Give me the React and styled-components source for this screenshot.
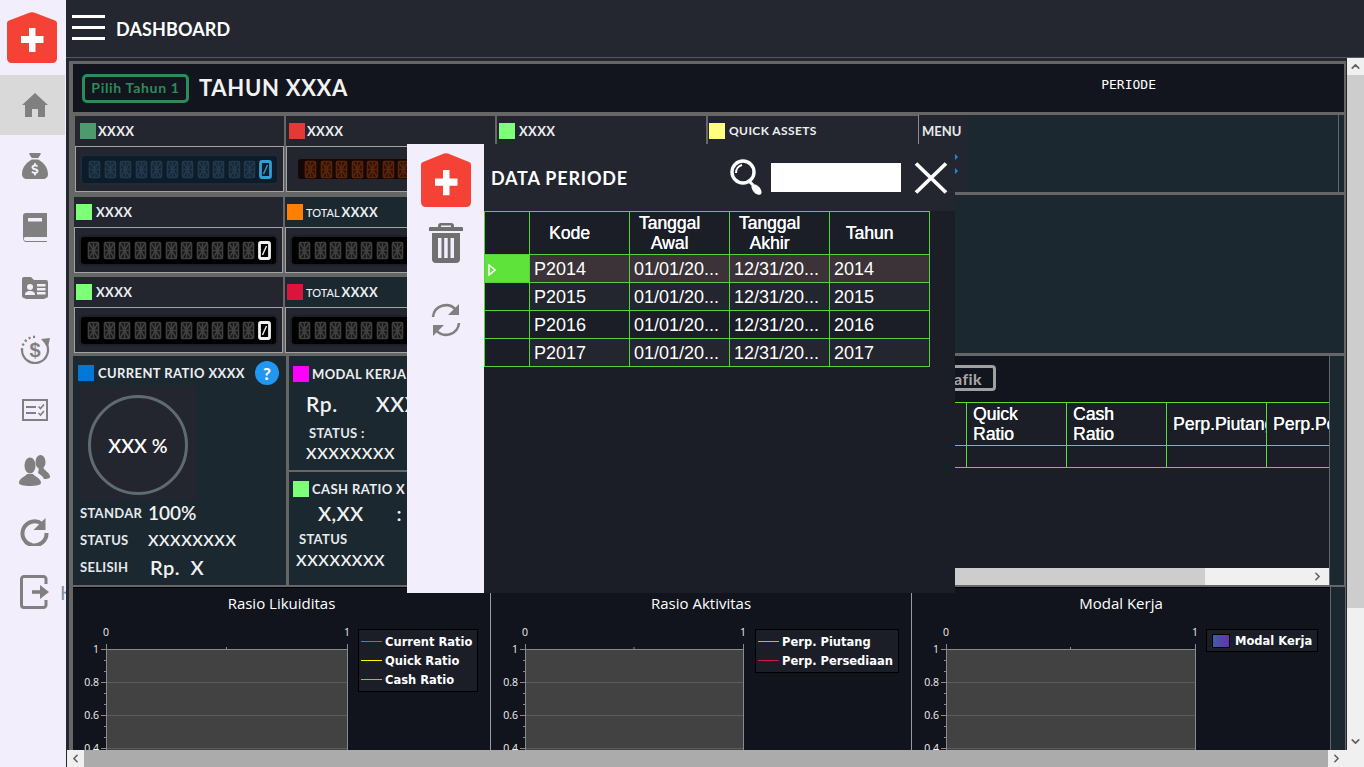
import React from 'react';
import styled, { createGlobalStyle } from 'styled-components';
import { FaSackDollar } from 'react-icons/fa6';
import { ChevronUp, ChevronDown, ChevronLeft, ChevronRight } from 'lucide-react';

const GlobalStyle = createGlobalStyle`
    html, body { margin: 0; padding: 0; background: #24272f; overflow: hidden; }
    * { box-sizing: border-box; }
`;

const LABEL_FONT = '"Lato", "Open Sans", sans-serif';
const TABLE_FONT = '"Liberation Sans", Arial, sans-serif';
const ICON_GREY = '#808080';

const Page = styled.div`
    position: relative;
    display: flex;
    width: 1364px;
    height: 767px;
    overflow: hidden;
    font-family: ${LABEL_FONT};
    color: #fff;
`;

/* sidebar */
const Sidebar = styled.aside`
    flex: 0 0 66px;
    height: 100%;
    background: #f3eefb;
    overflow: hidden;
`;

const LogoSlot = styled.div`
    height: 75px;
    padding: 12px 0 0 7px;
`;

const NavItem = styled.div`
    position: relative;
    height: ${props => props.$active ? '60px' : '60.8px'};
    margin-bottom: ${props => props.$active ? '1px' : '0'};
    width: 65px;
    padding-left: 4px;
    display: flex;
    align-items: center;
    justify-content: center;
    background: ${props => props.$active ? '#d9d9d9' : 'transparent'};
`;

const NavLabel = styled.span`
    position: absolute;
    left: 60px;
    top: 18px;
    font-size: 20px;
    color: #7f93ad;
`;

/* right side */
const Main = styled.div`
    flex: 1;
    min-width: 0;
    display: flex;
    flex-direction: column;
`;

const Header = styled.header`
    flex: 0 0 58px;
    display: flex;
    align-items: center;
    gap: 11px;
    padding: 0 0 0 6px;
    background: #24272f;
    border-bottom: 1px solid #555a5e;
`;

const Burger = styled.div`
    width: 33px;
    display: flex;
    flex-direction: column;
    gap: 8px;
    margin-top: -2px;
    span { display: block; height: 3px; background: #fff; }
`;

const HeaderTitle = styled.h1`
    margin: 0;
    font-size: 18px;
    font-weight: 700;
    letter-spacing: 0.1px;
`;

const ScrollRow = styled.div`
    flex: 1;
    min-height: 0;
    display: flex;
`;

const Canvas = styled.div`
    flex: 0 0 1281px;
    padding: 3px 1px 0 3px;
    background: #24272f;
    overflow: hidden;
`;

const CanvasInner = styled.div`
    height: 100%;
    padding: 3px 2px 0 4px;
    background: #666;
    overflow: hidden;
`;

const TopPanel = styled.section`
    height: 48px;
    display: flex;
    align-items: center;
    padding: 0 188px 0 9px;
    background: #12151e;
`;

const YearButton = styled.div`
    width: 107px;
    height: 29px;
    padding-bottom: 2px;
    display: flex;
    align-items: center;
    justify-content: center;
    border: 3px solid #2e8b57;
    border-radius: 5px;
    color: #2e8b57;
    font-size: 14px;
    font-weight: 700;
    letter-spacing: 0.7px;
`;

const YearTitle = styled.div`
    margin: -2px 0 0 10px;
    font-size: 22px;
    font-weight: 700;
    letter-spacing: 0.7px;
    color: #f2f2f2;
`;

const PeriodLabel = styled.div`
    margin: -8px 0 0 auto;
    font-family: "DejaVu Sans Mono", monospace;
    font-size: 13px;
`;

/* kpi area */
const KpiFirstRow = styled.div`
    display: flex;
    gap: 2px;
    height: 76px;
    margin-top: 4px;
    padding-left: 2px;
`;

const KpiRest = styled.div`
    display: flex;
    height: 158px;
    margin-top: 3px;
`;

const KpiColumns = styled.div`
    flex: 0 0 424px;
    padding: 2px 0 0 1px;
    display: grid;
    grid-template-columns: 209px 209px;
    grid-auto-rows: 76px;
    column-gap: 2px;
    row-gap: 4px;
`;

const Card = styled.div`
    width: ${props => props.$width || '209px'};
    display: flex;
    flex-direction: column;
    background: ${props => props.$teal ? '#1c2830' : '#24262f'};
`;

const CardHead = styled.div`
    flex: 0 0 30px;
    display: flex;
    align-items: center;
    gap: 2px;
    padding-left: ${props => props.$inset || '1px'};
`;

const Swatch = styled.i`
    flex: 0 0 16px;
    display: block;
    width: 16px;
    height: 16px;
    margin-top: ${props => props.$lift || '-1px'};
    background: ${props => props.$color};
`;

const CardLabel = styled.span`
    margin: -1px 0 0 ${props => props.$gap || '0'};
    padding-right: 4px;
    font-size: ${props => props.$size || '13px'};
    font-weight: 700;
    letter-spacing: 0.4px;
    color: #eceff2;
    white-space: nowrap;
    small { font-size: 11px; font-weight: 500; letter-spacing: 0; margin-right: 2px; }
`;

const ReadoutBox = styled.div`
    flex: 1;
    display: flex;
    align-items: center;
    padding: 0 4px;
    border: 1px solid #a3a3a3;
    background: #24262f;
    overflow: hidden;
`;

const LCD_TONES = {
    blue: { bg: '#0d1c29', edge: '#1f2a39', seg: '#22384b', lit: '#2f9fd2' },
    red: { bg: '#150804', edge: '#24262f', seg: '#59240b', lit: '#ff6a1a' },
    black: { bg: '#000', edge: '#1d1f26', seg: '#3f3f3f', lit: '#f2f2f2' },
};

const LcdFrame = styled.div`
    flex: 1;
    display: flex;
    gap: 2.5px;
    align-items: center;
    height: ${props => props.$tone === 'red' ? '24px' : '31px'};
    margin-left: ${props => props.$tone === 'red' ? '5px' : '0'};
    padding-left: 6px;
    border: 2px solid ${props => LCD_TONES[props.$tone].edge};
    border-radius: 5px;
    background: ${props => LCD_TONES[props.$tone].bg};
`;

const Digit = ({ color, lit }) => (
    <svg width="13" height="19" viewBox="0 0 13 19" style={{ flex: '0 0 13px' }}>
        {lit ? (
            <g fill="none" stroke={color}>
                <rect x="1.5" y="1.5" width="10" height="16" rx="1.5" strokeWidth="2.8" />
                <path d="M8.5 5 L4.5 14" strokeWidth="1.4" />
            </g>
        ) : (
            <g fill="none" stroke={color} strokeWidth="1.6">
                <rect x="1.5" y="1.5" width="10" height="16" rx="1" fill={color} fillOpacity="0.3" />
                <path d="M2 9.5 H11 M6.5 2 V17 M2 2 L11 17 M11 2 L2 17" />
            </g>
        )}
    </svg>
);

const Lcd = ({ tone = 'black', count = 12 }) => (
    <LcdFrame $tone={tone}>
        {Array.from({ length: count }, (_, i) => {
            const lit = tone !== 'red' && i === count - 1;
            return <Digit key={i} lit={lit} color={lit ? LCD_TONES[tone].lit : LCD_TONES[tone].seg} />;
        })}
    </LcdFrame>
);

const KpiCard = ({ color, label, prefix, tone, teal, inset, gap, width, size }) => (
    <Card $teal={teal} $width={width}>
        <CardHead $inset={inset}>
            <Swatch $color={color} />
            <CardLabel $gap={gap} $size={size}>{prefix && <small>{prefix}</small>}{label}</CardLabel>
        </CardHead>
        <ReadoutBox><Lcd tone={tone} /></ReadoutBox>
    </Card>
);

const MenuPanel = styled.div`
    flex: 1;
    display: flex;
    margin: -1px 0 0 -2px;
    background: #1c2830;
`;

const MenuEdge = styled.div`
    flex: 0 0 5px;
    margin: -1px 0 0 -1px;
    background: #1c2830;
`;

const MenuCell = styled.div`
    width: 50px;
    height: 100%;
    padding: 8px 0 0 3px;
    background: #24262f;
    border-left: 1px solid #8a8a8a;
    font-size: 13px;
    font-weight: 700;
    color: #e6e9ec;
`;

const MenuArrow = styled.i`
    display: block;
    width: 0;
    height: 0;
    margin: ${props => props.$first ? '15px' : '8px'} 0 0 33px;
    border-left: 3px solid #1e88e5;
    border-top: 3px solid transparent;
    border-bottom: 3px solid transparent;
`;

const KpiWide = styled.div`
    flex: 1;
    background: #1c2830;
`;

/* ratio row */
const LowerRow = styled.div`
    display: flex;
    height: 229px;
    margin-top: 3px;
`;

const RatioPanel = styled.div`
    flex: 0 0 213px;
    padding: 5px 0 0 5px;
    background: #1c2830;
`;

const RatioHead = styled.div`
    display: flex;
    align-items: center;
    height: 24px;
    gap: 4px;
`;

const HelpBadge = styled.span`
    flex: 0 0 24px;
    height: 24px;
    margin-left: 2px;
    display: flex;
    align-items: center;
    justify-content: center;
    border-radius: 50%;
    background: #2196f3;
    color: #fff;
    font-size: 17px;
    font-weight: 900;
`;

const GaugeBox = styled.div`
    width: 117px;
    height: 114px;
    margin: 1px 0 0 1px;
    padding: 9px 0 0 9px;
    background: #24262f;
`;

const Gauge = styled.div`
    width: 100px;
    height: 100px;
    display: flex;
    align-items: center;
    justify-content: center;
    border: 3px solid #5f6b73;
    border-radius: 50%;
    font-size: 19.5px;
    font-weight: 600;
`;

const StatRow = styled.div`
    display: grid;
    grid-template-columns: 68px 1fr;
    align-items: center;
    height: 27px;
    margin-top: ${props => props.$shift || '0'};
    padding-left: 2px;
`;

const StatLabel = styled.span`
    font-size: 13px;
    font-weight: 700;
    letter-spacing: 0.3px;
    color: #e6e9ec;
`;

const StatValue = styled.span`
    font-size: ${props => props.$size || '16px'};
    font-weight: 600;
    letter-spacing: ${props => props.$track || '0.5px'};
    padding-left: ${props => props.$inset || '0'};
    color: #f2f2f2;
    white-space: nowrap;
`;

const MiddleColumn = styled.div`
    flex: 0 0 211px;
    margin-left: 3px;
    display: flex;
    flex-direction: column;
    gap: 2px;
`;

const MiniCard = styled.div`
    flex: ${props => props.$grow};
    padding: ${props => props.$pad};
    background: #1c2830;
    overflow: hidden;
`;

const MiniHead = styled.div`
    display: flex;
    align-items: center;
    gap: 3px;
    height: 20px;
`;

const MiniLine = styled.div`
    display: flex;
    align-items: center;
    gap: ${props => props.$gap || '0'};
    margin: ${props => props.$space || '0'};
`;

const MiniAmount = styled.span`
    font-size: ${props => props.$size || '21px'};
    font-weight: 600;
    letter-spacing: ${props => props.$track || '0.6px'};
    color: #f2f2f2;
    white-space: nowrap;
`;

const TablePanel = styled.div`
    flex: 0 0 826px;
    margin-left: 3px;
    display: flex;
    flex-direction: column;
    background: #1b1e27;
    overflow: hidden;
`;

const TableBar = styled.div`
    flex: 0 0 46px;
    padding: 9px 0 0 373px;
    background: #12151e;
`;

const ChartButton = styled.div`
    width: 120px;
    height: 26px;
    display: flex;
    align-items: center;
    justify-content: flex-end;
    padding-right: 11px;
    border: 3px solid #a0a0a0;
    border-radius: 4px;
    color: #a8a8a8;
    font-size: 16px;
    font-weight: 700;
    letter-spacing: 0.4px;
`;

const RatioGrid = styled.table`
    flex: 0 0 auto;
    width: 863px;
    table-layout: fixed;
    border-collapse: collapse;
    font-family: ${TABLE_FONT};
    font-size: 17.5px;
    line-height: 20px;
    color: #fff;
    th, td {
        border: 1px solid #57dd37;
        text-align: left;
        font-weight: 400;
        overflow: hidden;
        white-space: nowrap;
    }
    th {
        height: 43px;
        padding: 0 20px 0 6px;
        white-space: normal;
        text-shadow: 0.3px 0 0 #fff;
    }
    td { height: 22px; padding: 0 0 0 6px; }
`;

const SideStripe = styled.div`
    flex: 0 0 14px;
    margin-left: 1px;
    background: #1c2830;
`;

const PanelScroll = styled.div`
    margin-top: auto;
    flex: 0 0 17px;
    display: flex;
    align-items: center;
    justify-content: flex-end;
    padding-right: 5px;
    background: linear-gradient(to right, #cdcdcd 702px, #f0f0f0 702px);
`;

/* charts */
const ChartRow = styled.div`
    display: flex;
    height: 170px;
    margin-top: 2px;
`;

const ChartCard = styled.div`
    flex: 0 0 ${props => props.$width}px;
    padding-top: 5px;
    background: #11141d;
    border-top: 1px solid #000;
    border-right: ${props => props.$divider ? '1px solid #9a9a9a' : 'none'};
    overflow: hidden;
`;

const ChartTitle = styled.div`
    height: 22px;
    text-align: center;
    font-family: "Open Sans", sans-serif;
    font-size: 15px;
    color: #fff;
`;

const ChartBody = styled.div`
    display: flex;
    align-items: flex-start;
`;

const Legend = styled.ul`
    list-style: none;
    margin: 14px 0 0 ${props => props.$gap}px;
    padding: ${props => props.$pad || '2px 5px 2px 2px'};
    background: #1b1e27;
    border: 1px solid #000;
    font-family: "DejaVu Sans", sans-serif;
    font-size: 11.5px;
    font-weight: 700;
    color: #fff;
`;

const LegendItem = styled.li`
    display: flex;
    align-items: center;
    gap: 3px;
    height: 19px;
    white-space: nowrap;
`;

const LegendLine = styled.i`
    display: block;
    flex: 0 0 21px;
    height: 1px;
    background: ${props => props.$color};
`;

const LegendSwatch = styled.i`
    display: block;
    width: 18px;
    height: 14px;
    margin: 0 2px;
    border: 1px solid #000;
    background: linear-gradient(to right, #3b5fa8, #6a2fa8);
`;

/* window scrollbars */
const VScroll = styled.div`
    flex: 0 0 17px;
    display: flex;
    flex-direction: column;
    align-items: center;
    background: #f0f0f0;
    color: #606060;
`;

const VThumb = styled.div`
    width: 100%;
    height: 533px;
    margin-bottom: auto;
    background: #cdcdcd;
`;

const ArrowSlot = styled.div`
    flex: 0 0 17px;
    display: flex;
    align-items: center;
    justify-content: center;
    color: #606060;
`;

const HScroll = styled.div`
    flex: 0 0 17px;
    display: flex;
    margin-left: 1px;
    background: #f0f0f0;
`;

const HThumb = styled.div`
    flex: 0 0 1244px;
    background: #ababab;
`;

/* dialog */
const Dialog = styled.div`
    position: absolute;
    left: 407px;
    top: 144px;
    width: 548px;
    height: 449px;
    display: flex;
    background: #1b1e27;
`;

const DialogRail = styled.div`
    flex: 0 0 77px;
    display: flex;
    flex-direction: column;
    align-items: center;
    padding-top: 9px;
    background: #f3eefb;
`;

const RailButton = styled.div`
    display: flex;
    justify-content: center;
    margin-top: ${props => props.$gap}px;
`;

const DialogMain = styled.div`
    flex: 1;
    min-width: 0;
`;

const DialogHead = styled.div`
    height: 67px;
    display: flex;
    align-items: center;
    padding: 0 7px 0 7px;
    background: #24262f;
`;

const DialogTitle = styled.div`
    flex: 1;
    font-size: 18px;
    font-weight: 700;
    letter-spacing: 0.8px;
    margin-top: 1px;
`;

const SearchInput = styled.div`
    width: 130px;
    height: 29px;
    margin: 0 13px 0 9px;
    background: #fff;
`;

const PeriodTable = styled.table`
    width: 446px;
    table-layout: fixed;
    border-collapse: collapse;
    font-family: ${TABLE_FONT};
    color: #fff;
    th, td {
        border: 1px solid #57d13f;
        overflow: hidden;
        white-space: nowrap;
    }
    th {
        height: 43px;
        font-size: 17.5px;
        line-height: 20px;
        font-weight: 400;
        text-align: center;
        white-space: normal;
        padding: 0 20px 0 0;
        background: #1b1e27;
        text-shadow: 0.3px 0 0 #fff;
    }
    td {
        height: 28px;
        padding: 2px 0 0 4px;
        font-size: 18px;
    }
`;

const PeriodRow = styled.tr`
    background: ${props => props.$selected ? '#3c3338' : props.$odd ? '#24262f' : '#1b1e27'};
`;

const RowHead = styled.td`
    background: ${props => props.$selected ? '#5de33a' : '#1b1e27'};
`;

/* drawn icons */
const Logo = ({ h = 51 }) => (
    <svg width="50" height={h} viewBox="0 0 50 51" preserveAspectRatio="none" style={{ display: 'block' }}>
        <path d="M0 11 Q0 9 2 8.5 L23 0.5 Q25 -0.2 27 0.5 L48 8.5 Q50 9 50 11 V46 Q50 51 45 51 H5 Q0 51 0 46 Z" fill="#f44336" />
        <path d="M22 16 H28.5 V24 H36.5 V31 H28.5 V40 H22 V31 H14 V24 H22 Z" fill="#fff" />
    </svg>
);

const HomeIcon = () => (
    <svg width="26" height="24" viewBox="0 0 26 24" fill={ICON_GREY}>
        <path d="M13 0 L26 12 H23 V24 H16 V16 H10 V24 H3 V12 H0 Z" />
    </svg>
);

const BookIcon = () => (
    <svg width="24" height="29" viewBox="0 0 24 29">
        <path d="M0 3 A3 3 0 0 1 3 0 H24 V24 H3 A3 3 0 0 0 0 26 Z" fill={ICON_GREY} />
        <rect x="5" y="5" width="14" height="3.5" fill="#f3eefb" />
        <path d="M0.5 25.5 A2.5 2.5 0 0 0 3 28.5 H24" fill="none" stroke={ICON_GREY} />
    </svg>
);

const CardIcon = () => (
    <svg width="26" height="22" viewBox="0 0 26 22">
        <path d="M2 0 H9 L12 3 H24 A2 2 0 0 1 26 5 V19 A2 2 0 0 1 24 21 L22 22 H4 L2 21 A2 2 0 0 1 0 19 V2 A2 2 0 0 1 2 0 Z" fill={ICON_GREY} />
        <g fill="#f3eefb">
            <circle cx="8" cy="10" r="3" />
            <path d="M3 18 C3 15 5 14 8 14 S13 15 13 18 Z" />
            <rect x="15" y="7" width="8.5" height="2.5" />
            <rect x="15" y="11" width="8.5" height="2.5" />
            <rect x="15" y="15" width="8.5" height="2.5" />
        </g>
    </svg>
);

const DollarCycleIcon = () => (
    <svg width="30" height="30" viewBox="0 0 30 30" fill="none" stroke={ICON_GREY}>
        <path d="M25.6 8.5 A13 13 0 1 1 2 16" strokeWidth="2.2" />
        <path d="M2 16 A13 13 0 0 1 17 3" strokeWidth="2.4" strokeDasharray="2 2.6" />
        <polygon points="21,5 30,4 28,13" fill={ICON_GREY} stroke="none" />
        <text x="15" y="23" textAnchor="middle" fontFamily="Liberation Sans" fontWeight="700" fontSize="20" fill={ICON_GREY} stroke="none">$</text>
    </svg>
);

const ChecklistIcon = () => (
    <svg width="26" height="22" viewBox="0 0 26 22" fill="none" stroke={ICON_GREY}>
        <rect x="1" y="1" width="24" height="20" strokeWidth="2" />
        <path d="M4 8 H14 M4 14 H14" strokeWidth="2.2" />
        <path d="M16.5 7.5 L18.5 9.5 L22 5.5 M16.5 14 L18.5 16 L22 12" strokeWidth="1.6" />
    </svg>
);

const UsersIcon = () => (
    <svg width="31" height="31" viewBox="0 0 31 31" fill={ICON_GREY}>
        <ellipse cx="21.5" cy="7" rx="5" ry="7" />
        <path d="M24 12 C25 16 31 17 31 22 C31 23.5 28 24 25 24 C24 21 21 19.5 19 18 L20 13 Z" />
        <ellipse cx="11" cy="10.5" rx="5.5" ry="8" />
        <path d="M0 28 C0 23 6 22 8 19 H14 C16 22 22 23 22 28 C22 30 17 31 11 31 S0 30 0 28 Z" />
    </svg>
);

const ReloadIcon = () => (
    <svg width="29" height="29" viewBox="0 0 29 29" fill="none" stroke={ICON_GREY} strokeWidth="4">
        <path d="M22 7 A12 12 0 1 0 26.5 16" />
        <polygon points="25.5,1 25.5,13 13.5,13" fill={ICON_GREY} stroke="none" />
    </svg>
);

const LogoutIcon = () => (
    <svg width="29" height="34" viewBox="0 0 29 34" fill="none" stroke={ICON_GREY}>
        <path d="M26 9 V4 A2.5 2.5 0 0 0 23.5 1.5 H4 A2.5 2.5 0 0 0 1.5 4 V30 A2.5 2.5 0 0 0 4 32.5 H23.5 A2.5 2.5 0 0 0 26 30 V25" strokeWidth="3" />
        <path d="M12 17 H22" strokeWidth="3.6" />
        <polygon points="20,10 29,17 20,24" fill={ICON_GREY} stroke="none" />
    </svg>
);

const TrashIcon = () => (
    <svg width="34" height="40" viewBox="0 0 34 40" fill="#707070">
        <path d="M12 0 H22 A3 3 0 0 1 25 3 V4 H33 A1 1 0 0 1 34 5 V8 H0 V5 A1 1 0 0 1 1 4 H9 V3 A3 3 0 0 1 12 0 Z M12 2.5 V4 H22 V2.5 Z" fillRule="evenodd" />
        <path d="M3 10 H31 V36 A4 4 0 0 1 27 40 H7 A4 4 0 0 1 3 36 Z" />
        <g fill="#f3eefb">
            <rect x="9" y="15" width="3.5" height="20" />
            <rect x="15.2" y="15" width="3.5" height="20" />
            <rect x="21.5" y="15" width="3.5" height="20" />
        </g>
    </svg>
);

const SyncIcon = () => (
    <svg width="30" height="34" viewBox="0 0 30 34" fill="none" stroke={ICON_GREY} strokeWidth="2.6">
        <path d="M2 14 A13 13 0 0 1 25 7" />
        <polygon points="28,1 28,12 17,12" fill={ICON_GREY} stroke="none" />
        <path d="M28 20 A13 13 0 0 1 5 27" />
        <polygon points="2,33 2,22 13,22" fill={ICON_GREY} stroke="none" />
    </svg>
);

const SearchIcon = () => (
    <svg width="32" height="37" viewBox="0 0 32 37" fill="none" stroke="#fff">
        <circle cx="13" cy="13" r="11" strokeWidth="3.4" />
        <path d="M6 14 A8 8 0 0 1 12 6" strokeWidth="2" />
        <path d="M20 23 L23 26" strokeWidth="3" />
        <ellipse cx="26.5" cy="30.5" rx="3.6" ry="6.4" transform="rotate(-42 26.5 30.5)" fill="#fff" stroke="none" />
    </svg>
);

const CloseIcon = () => (
    <svg width="34" height="32" viewBox="0 0 34 32" fill="none" stroke="#fff" strokeWidth="3.8">
        <path d="M2 1.5 L32 30.5 M32 1.5 L2 30.5" />
    </svg>
);

const RowTriangle = () => (
    <svg width="8" height="12" viewBox="0 0 8 12" style={{ display: 'block', marginLeft: -1 }}>
        <path d="M1 1 L7 6 L1 11 Z" fill="#5de33a" stroke="#fff" strokeWidth="1.6" />
    </svg>
);

/* plot with the value axis */
const PlotChart = ({ plotLeft, plotWidth }) => {
    const top = 34;
    const right = plotLeft + plotWidth;
    const major = [['1', 0], ['0.8', 33], ['0.6', 66], ['0.4', 99]];
    return (
        <svg width={right + 8} height="138" style={{ flex: 'none', display: 'block' }} fontFamily="Open Sans" fontSize="10.5" fill="#f2f2f2">
            <text x={plotLeft} y="21" textAnchor="middle">0</text>
            <text x={right} y="21" textAnchor="middle">1</text>
            <rect x={plotLeft} y={top} width={plotWidth} height="104" fill="#424242" />
            {major.slice(1).map(([label, dy]) => (
                <line key={label} x1={plotLeft} x2={right} y1={top + dy + 0.5} y2={top + dy + 0.5} stroke="#5c5c5c" />
            ))}
            <path d={`M${plotLeft + 0.5} ${top - 5} V138 M${right + 0.5} ${top - 5} V138 M${plotLeft - 5} ${top + 0.5} H${right}`} stroke="#8a8a8a" fill="none" />
            <line x1={plotLeft + plotWidth / 2} x2={plotLeft + plotWidth / 2} y1={top - 2} y2={top} stroke="#8a8a8a" />
            {major.map(([label, dy]) => (
                <g key={label}>
                    <line x1={plotLeft - 5} x2={plotLeft} y1={top + dy + 0.5} y2={top + dy + 0.5} stroke="#8a8a8a" />
                    <text x={plotLeft - 7} y={top + dy + 4} textAnchor="end">{label}</text>
                </g>
            ))}
            {[11, 22, 44, 55, 77, 88].map(dy => (
                <line key={dy} x1={plotLeft - 2} x2={plotLeft} y1={top + dy + 0.5} y2={top + dy + 0.5} stroke="#8a8a8a" />
            ))}
        </svg>
    );
};

const periods = [
    { code: 'P2014', year: '2014' },
    { code: 'P2015', year: '2015' },
    { code: 'P2016', year: '2016' },
    { code: 'P2017', year: '2017' },
];

const App = () => (
    <Page>
        <GlobalStyle />
        <Sidebar>
            <LogoSlot><Logo /></LogoSlot>
            <NavItem $active><HomeIcon /></NavItem>
            <NavItem><FaSackDollar size={26} color={ICON_GREY} /></NavItem>
            <NavItem><BookIcon /></NavItem>
            <NavItem><CardIcon /></NavItem>
            <NavItem><DollarCycleIcon /></NavItem>
            <NavItem><ChecklistIcon /></NavItem>
            <NavItem><UsersIcon /></NavItem>
            <NavItem><ReloadIcon /></NavItem>
            <NavItem><LogoutIcon /><NavLabel>Keluar</NavLabel></NavItem>
        </Sidebar>

        <Main>
            <Header>
                <Burger><span /><span /><span /></Burger>
                <HeaderTitle>DASHBOARD</HeaderTitle>
            </Header>

            <ScrollRow>
                <Canvas>
                    <CanvasInner>
                        <TopPanel>
                            <YearButton>Pilih Tahun 1</YearButton>
                            <YearTitle>TAHUN XXXA</YearTitle>
                            <PeriodLabel>PERIODE</PeriodLabel>
                        </TopPanel>

                        <KpiFirstRow>
                            <KpiCard color="#4e9a6f" label="XXXX" tone="blue" inset="5px" />
                            <KpiCard color="#e53935" label="XXXX" tone="red" inset="3px" />
                            <KpiCard color="#7dff7a" label="XXXX" inset="2px" gap="2px" />
                            <KpiCard color="#ffff80" label="QUICK ASSETS" inset="1px" gap="2px" width="210px" size="12px" />
                            <MenuPanel>
                                <MenuCell>MENU<MenuArrow $first /><MenuArrow /></MenuCell>
                            </MenuPanel>
                            <MenuEdge />
                        </KpiFirstRow>

                        <KpiRest>
                            <KpiColumns>
                                <KpiCard color="#7dff7a" label="XXXX" inset="2px" gap="2px" />
                                <KpiCard color="#ff8000" label="XXXX" prefix="TOTAL" teal inset="2px" gap="1px" />
                                <KpiCard color="#7dff7a" label="XXXX" inset="2px" gap="2px" />
                                <KpiCard color="#dc143c" label="XXXX" prefix="TOTAL" teal inset="2px" gap="1px" />
                            </KpiColumns>
                            <KpiWide />
                        </KpiRest>

                        <LowerRow>
                            <RatioPanel>
                                <RatioHead>
                                    <Swatch $color="#0078d7" $lift="0" />
                                    <CardLabel>CURRENT RATIO XXXX</CardLabel>
                                    <HelpBadge>?</HelpBadge>
                                </RatioHead>
                                <GaugeBox><Gauge>XXX %</Gauge></GaugeBox>
                                <StatRow $shift="-1px">
                                    <StatLabel>STANDAR</StatLabel>
                                    <StatValue $size="19px" $track="0">100%</StatValue>
                                </StatRow>
                                <StatRow>
                                    <StatLabel>STATUS</StatLabel>
                                    <StatValue>XXXXXXXX</StatValue>
                                </StatRow>
                                <StatRow>
                                    <StatLabel>SELISIH</StatLabel>
                                    <StatValue $size="20px" $track="0.4px" $inset="2px">Rp.&nbsp; X</StatValue>
                                </StatRow>
                            </RatioPanel>

                            <MiddleColumn>
                                <MiniCard $grow="0 0 114px" $pad="8px 0 0 4px">
                                    <MiniHead>
                                        <Swatch $color="#ff00ff" $lift="0" />
                                        <CardLabel>MODAL KERJA</CardLabel>
                                    </MiniHead>
                                    <MiniLine $space="7px 0 0 13px" $gap="38px">
                                        <MiniAmount>Rp.</MiniAmount>
                                        <MiniAmount>XXX</MiniAmount>
                                    </MiniLine>
                                    <MiniLine $space="9px 0 0 16px"><StatLabel>STATUS :</StatLabel></MiniLine>
                                    <MiniLine $space="2px 0 0 13px"><MiniAmount $size="16px">XXXXXXXX</MiniAmount></MiniLine>
                                </MiniCard>
                                <MiniCard $grow="1" $pad="7px 0 0 4px">
                                    <MiniHead>
                                        <Swatch $color="#7dff7a" $lift="0" />
                                        <CardLabel>CASH RATIO X</CardLabel>
                                    </MiniHead>
                                    <MiniLine $space="2px 0 0 25px" $gap="33px">
                                        <MiniAmount $size="20px" $track="0.3px">X,XX</MiniAmount>
                                        <MiniAmount $size="20px">:</MiniAmount>
                                    </MiniLine>
                                    <MiniLine $space="6px 0 0 6px"><StatLabel>STATUS</StatLabel></MiniLine>
                                    <MiniLine $space="3px 0 0 3px"><MiniAmount $size="16px">XXXXXXXX</MiniAmount></MiniLine>
                                </MiniCard>
                            </MiddleColumn>

                            <TablePanel>
                                <TableBar><ChartButton>Grafik</ChartButton></TableBar>
                                <RatioGrid>
                                    <colgroup>
                                        <col style={{ width: 63 }} />
                                        {Array.from({ length: 8 }, (_, i) => <col key={i} style={{ width: 100 }} />)}
                                    </colgroup>
                                    <thead>
                                        <tr>
                                            <th /><th /><th /><th />
                                            <th />
                                            <th>Quick Ratio</th>
                                            <th>Cash Ratio</th>
                                            <th>Perp.Piutang</th>
                                            <th>Perp.Persediaan</th>
                                        </tr>
                                    </thead>
                                    <tbody>
                                        <tr>{Array.from({ length: 9 }, (_, i) => <td key={i} />)}</tr>
                                    </tbody>
                                </RatioGrid>
                                <PanelScroll><ChevronRight size={13} strokeWidth={3} color="#606060" /></PanelScroll>
                            </TablePanel>
                            <SideStripe />
                        </LowerRow>

                        <ChartRow>
                            <ChartCard $width={418} $divider>
                                <ChartTitle>Rasio Likuiditas</ChartTitle>
                                <ChartBody>
                                    <PlotChart plotLeft={33} plotWidth={241} />
                                    <Legend $gap={3}>
                                        <LegendItem><LegendLine $color="#4a7ebb" />Current Ratio</LegendItem>
                                        <LegendItem><LegendLine $color="#ffff00" />Quick Ratio</LegendItem>
                                        <LegendItem><LegendLine $color="#00ff7f" />Cash Ratio</LegendItem>
                                    </Legend>
                                </ChartBody>
                            </ChartCard>
                            <ChartCard $width={421} $divider>
                                <ChartTitle>Rasio Aktivitas</ChartTitle>
                                <ChartBody>
                                    <PlotChart plotLeft={34} plotWidth={218} />
                                    <Legend $gap={4}>
                                        <LegendItem><LegendLine $color="#ff9933" />Perp. Piutang</LegendItem>
                                        <LegendItem><LegendLine $color="#c41e3a" />Perp. Persediaan</LegendItem>
                                    </Legend>
                                </ChartBody>
                            </ChartCard>
                            <ChartCard $width={418}>
                                <ChartTitle>Modal Kerja</ChartTitle>
                                <ChartBody>
                                    <PlotChart plotLeft={34} plotWidth={249} />
                                    <Legend $gap={3} $pad="1px 5px 1px 3px">
                                        <LegendItem><LegendSwatch />Modal Kerja</LegendItem>
                                    </Legend>
                                </ChartBody>
                            </ChartCard>
                            <SideStripe />
                        </ChartRow>
                    </CanvasInner>
                </Canvas>
                <VScroll>
                    <ArrowSlot><ChevronUp size={13} strokeWidth={3} /></ArrowSlot>
                    <VThumb />
                    <ArrowSlot><ChevronDown size={13} strokeWidth={3} /></ArrowSlot>
                </VScroll>
            </ScrollRow>

            <HScroll>
                <ArrowSlot><ChevronLeft size={13} strokeWidth={3} /></ArrowSlot>
                <HThumb />
                <ArrowSlot><ChevronRight size={13} strokeWidth={3} /></ArrowSlot>
            </HScroll>
        </Main>

        <Dialog>
            <DialogRail>
                <Logo h={54} />
                <RailButton $gap={16}><TrashIcon /></RailButton>
                <RailButton $gap={40}><SyncIcon /></RailButton>
            </DialogRail>
            <DialogMain>
                <DialogHead>
                    <DialogTitle>DATA PERIODE</DialogTitle>
                    <SearchIcon />
                    <SearchInput />
                    <CloseIcon />
                </DialogHead>
                <PeriodTable>
                    <colgroup>
                        <col style={{ width: 45 }} />
                        <col style={{ width: 100 }} />
                        <col style={{ width: 100 }} />
                        <col style={{ width: 100 }} />
                        <col style={{ width: 100 }} />
                    </colgroup>
                    <thead>
                        <tr>
                            <th />
                            <th>Kode</th>
                            <th>Tanggal Awal</th>
                            <th>Tanggal Akhir</th>
                            <th>Tahun</th>
                        </tr>
                    </thead>
                    <tbody>
                        {periods.map((p, i) => (
                            <PeriodRow key={p.code} $selected={i === 0} $odd={i % 2 === 1}>
                                <RowHead $selected={i === 0}>{i === 0 && <RowTriangle />}</RowHead>
                                <td>{p.code}</td>
                                <td>01/01/20...</td>
                                <td>12/31/20...</td>
                                <td>{p.year}</td>
                            </PeriodRow>
                        ))}
                    </tbody>
                </PeriodTable>
            </DialogMain>
        </Dialog>
    </Page>
);

export default App;
